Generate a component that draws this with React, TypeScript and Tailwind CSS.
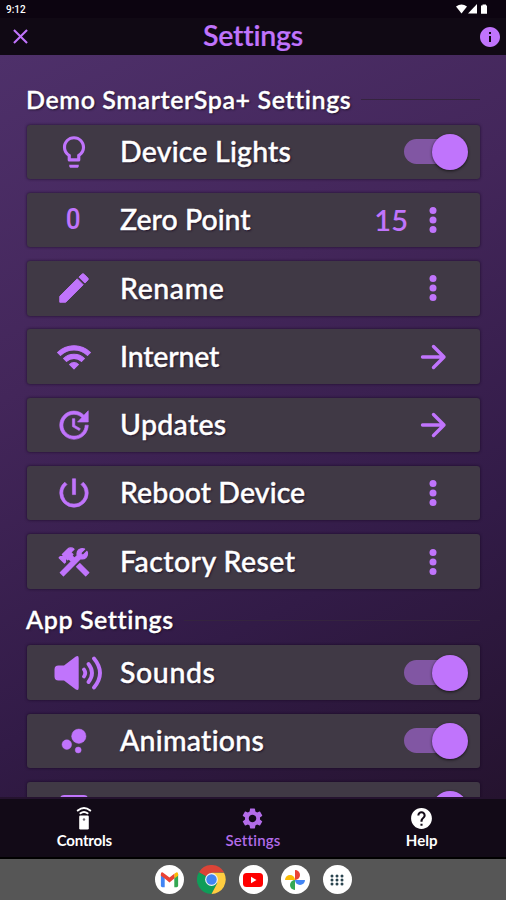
import React, { useState } from 'react';
import {
  MdBubbleChart,
  MdConstruction,
  MdEdit,
  MdHelp,
  MdInfo,
  MdLightbulbOutline,
  MdOutlineClose,
  MdPowerSettingsNew,
  MdSettings,
  MdUpdate,
  MdWifi,
} from 'react-icons/md';

const DotsIcon = () => (
  <svg viewBox="0 0 8 28" className="w-2 h-7" fill="currentColor">
    <circle cx="4" cy="4.4" r="3.5" />
    <circle cx="4" cy="14" r="3.5" />
    <circle cx="4" cy="23.6" r="3.5" />
  </svg>
);

const ArrowIcon = () => (
  <svg viewBox="0 0 28 28" className="w-7 h-7" fill="none" stroke="currentColor" strokeWidth="3.4" strokeLinecap="round" strokeLinejoin="round">
    <path d="M3.500 14H25M14.500 3.500L25 14 14.500 24.500" />
  </svg>
);

const SoundIcon = () => (
  <svg viewBox="0 0 50 36" className="w-[50px] h-9 ml-2.5 shrink-0" fill="none" stroke="currentColor" strokeWidth="3.8" strokeLinecap="round">
    <path d="M4.500 10.500H10L21.500 1.800q3.200-2 3.200 1.500v29.400q0 3.500-3.200 1.500L10 25.500H4.500Q.5 25.500.5 21.500v-7q0-4 4-4z" fill="currentColor" stroke="none" />
    <path d="M30 14.500q2.500 3.500 0 7M34.500 9q7 9 0 18M40 3.500q12 14.500 0 29" />
  </svg>
);

const RemoteIcon = () => (
  <svg viewBox="0 0 16 25" className="w-4 h-[25px]" fill="none" stroke="currentColor" strokeWidth="2" strokeLinecap="round">
    <path d="M1.800 4.500Q8-.5 14.200 4.500M4.500 7.300q3.500-2.600 7 0" />
    <rect x="3.200" y="9.500" width="9.600" height="14" rx="1.200" fill="currentColor" stroke="none" />
    <circle cx="8" cy="13.500" r="1.200" fill="#6b6570" stroke="none" />
  </svg>
);

const GmailLogo = () => (
  <svg viewBox="0 0 24 24" className="w-[23px] h-[23px]">
    <path d="M3 6.500l4 3V20H4.500Q3 20 3 18.500z" fill="#4285f4" />
    <path d="M21 6.500l-4 3V20h2.500q1.500 0 1.500-1.500z" fill="#34a853" />
    <path d="M17 6l2-1.300q2-.7 2 1.800v1.500l-4 3z" fill="#fbbc04" />
    <path d="M3 8V6.500Q3 4 5 4.700L12 10l5-4v5l-5 4-5-4z" fill="#ea4335" />
  </svg>
);

const ChromeLogo = () => (
  <svg viewBox="0 0 30 30" className="w-[29px] h-[29px]">
    <path d="M15 15L2 7.500A15 15 0 0 1 28 7.500L15 8z" fill="#db4437" />
    <path d="M15 15L2 7.500A15 15 0 0 0 15 30L21 18.500z" fill="#0f9d58" />
    <path d="M15 8h13A15 15 0 0 1 15 30l6-11.500z" fill="#ffcd40" />
    <circle cx="15" cy="15" r="6.600" fill="#f1f1f1" />
    <circle cx="15" cy="15" r="5.400" fill="#4285f4" />
  </svg>
);

const YouTubeLogo = () => (
  <svg viewBox="0 0 24 24" className="w-6 h-6">
    <rect x="2" y="5" width="20" height="14" rx="3.500" fill="#ff0000" />
    <path d="M10 8.800v6.400l5.500-3.200z" fill="#fff" />
  </svg>
);

const PhotosLogo = () => (
  <svg viewBox="0 0 24 24" className="w-6 h-6">
    <path d="M12 2a5 5 0 0 1 0 10z" fill="#ea4335" />
    <path d="M22 12a5 5 0 0 1-10 0z" fill="#4285f4" />
    <path d="M12 22a5 5 0 0 1 0-10z" fill="#34a853" />
    <path d="M2 12a5 5 0 0 1 10 0z" fill="#fbbc04" />
  </svg>
);

const AppsLogo = () => (
  <svg viewBox="0 0 24 24" className="w-6 h-6" fill="#29434e">
    {[7, 12, 17].map((x) => [8, 12, 16].map((y) => <circle key={`${x}-${y}`} cx={x} cy={y} r="1.500" />))}
  </svg>
);

interface ToggleProps {
  defaultOn?: boolean;
}

const Toggle: React.FC<ToggleProps> = ({ defaultOn = true }) => {
  const [on, setOn] = useState(defaultOn);

  return (
    <button
      type="button"
      role="switch"
      aria-checked={on}
      onClick={() => setOn(!on)}
      className={`w-[60px] h-[25px] mr-4 flex items-center rounded-full bg-[#8156a3] ${on ? 'justify-end' : 'justify-start'}`}
    >
      <span className={`w-9 h-9 shrink-0 rounded-full bg-[#c074fc] shadow-[0_1px_3px_rgba(0,0,0,0.65)] ${on ? '-mr-1' : '-ml-1'}`} />
    </button>
  );
};

interface RowProps {
  icon: React.ReactNode;
  label?: string;
  labelClass?: string;
  children: React.ReactNode;
}

const Row: React.FC<RowProps> = ({ icon, label, labelClass = '', children }) => (
  <div className="h-[54.500px] shrink-0 flex items-center rounded-[3px] bg-[#403945] shadow-[0_0_3px_rgba(20,5,30,0.8)] text-[#c074fc]">
    {/* The icons carry an unfilled bounding box that must stay unstroked */}
    <div className="w-[93px] flex justify-center shrink-0 [&_svg>[fill=none]]:stroke-none [&_g>[fill=none]]:stroke-none">{icon}</div>
    <span className={`flex-1 pb-px whitespace-nowrap text-white text-[28.500px] leading-none font-medium [-webkit-text-stroke:0.4px_white] [text-shadow:1px_1px_2px_#1c1028] ${labelClass}`}>{label}</span>
    {children}
  </div>
);

const Action: React.FC<{ children: React.ReactNode }> = ({ children }) => (
  <button type="button" className="w-9 mr-[29px] flex justify-center">{children}</button>
);

const SectionTitle: React.FC<{ className?: string; children: React.ReactNode }> = ({ className = '', children }) => (
  <div className="h-[41px] shrink-0 flex items-center gap-2.5">
    <h2 className={`-ml-px pb-px text-white text-[25px] leading-none font-semibold whitespace-nowrap [-webkit-text-stroke:0.3px_white] [text-shadow:1px_1px_2px_#1c1028] ${className}`}>{children}</h2>
    <div className="flex-1 h-px bg-[#35243f]" />
  </div>
);

export default function App() {
  return (
    <div className="w-[506px] h-[900px] flex flex-col overflow-hidden bg-[#100914] font-['Lato',sans-serif] [font-variant-ligatures:none]">
      {/* Status bar */}
      <div className="h-[18px] shrink-0 flex items-center justify-between pl-1.5 pr-[18px] bg-[#0c0410] text-white">
        <span className="text-[10px] font-['Roboto',sans-serif] font-medium">9:12</span>
        <svg viewBox="0 0 32 10" className="w-8 h-2.5" fill="#fff">
          <path d="M0 2.500Q5.500-1.500 11 2.500L5.500 9.500z" />
          <path d="M21 0v9.500h-9z" />
          <path d="M26.500.5H30v1h1v8.200h-6V1.500h1.500z" />
        </svg>
      </div>

      {/* Title bar */}
      <header className="h-[37px] shrink-0 flex items-center justify-between pl-2 pr-1 text-[#c074fc]">
        <MdOutlineClose className="w-[25px] h-[25px]" />
        <h1 className="pb-0.5 mr-[5px] text-[28.500px] leading-none font-semibold tracking-[-0.2px] [-webkit-text-stroke:0.2px_#c074fc]">Settings</h1>
        <MdInfo className="w-6 h-6" />
      </header>

      <main className="flex-1 min-h-0 overflow-hidden pt-6 pl-[27px] pr-[26px] bg-[linear-gradient(154deg,#4e306a_0%,#43265a_35%,#321b47_70%,#25132f_100%)]">
        <SectionTitle className="tracking-[0.580px]">Demo SmarterSpa+ Settings</SectionTitle>
        <div className="mt-[4.500px] flex flex-col gap-[13.800px]">
          <Row icon={<MdLightbulbOutline className="w-[38px] h-[38px]" />} label="Device Lights" labelClass="tracking-[0.200px]">
            <Toggle />
          </Row>
          <Row icon={<span className="pb-px text-[29px] leading-none font-medium font-['Roboto',sans-serif] scale-x-90">0</span>} label="Zero Point">
            <span className="mr-[7px] pb-0.5 text-[29px] leading-none font-semibold">15</span>
            <Action><DotsIcon /></Action>
          </Row>
          <Row icon={<MdEdit className="w-[38px] h-[38px]" stroke="currentColor" strokeWidth="0.6" strokeLinejoin="round" />} label="Rename" labelClass="tracking-[0.600px]">
            <Action><DotsIcon /></Action>
          </Row>
          <Row icon={<MdWifi className="w-9 h-9" stroke="currentColor" strokeWidth="0.7" strokeLinejoin="round" />} label="Internet" labelClass="tracking-[-0.200px]">
            <Action><ArrowIcon /></Action>
          </Row>
          <Row icon={<MdUpdate className="w-[38px] h-[38px]" stroke="currentColor" strokeWidth="0.4" strokeLinejoin="round" />} label="Updates" labelClass="tracking-[0.300px]">
            <Action><ArrowIcon /></Action>
          </Row>
          <Row icon={<MdPowerSettingsNew className="w-[38px] h-[38px]" stroke="currentColor" strokeWidth="0.4" strokeLinejoin="round" />} label="Reboot Device" labelClass="tracking-[0.080px]">
            <Action><DotsIcon /></Action>
          </Row>
          <Row icon={<MdConstruction className="w-9 h-9" stroke="currentColor" strokeWidth="0.8" strokeLinejoin="round" />} label="Factory Reset" labelClass="tracking-[0.420px]">
            <Action><DotsIcon /></Action>
          </Row>
        </div>

        <div className="mt-[11px]">
          <SectionTitle className="tracking-[0.580px]">App Settings</SectionTitle>
        </div>
        <div className="mt-[4.500px] flex flex-col gap-[13.800px]">
          <Row icon={<SoundIcon />} label="Sounds" labelClass="tracking-[0.600px]">
            <Toggle />
          </Row>
          <Row icon={<MdBubbleChart className="w-9 h-9" stroke="currentColor" strokeWidth="0.3" />} label="Animations" labelClass="tracking-[0.250px]">
            <Toggle />
          </Row>
          <Row icon={<span className="w-7 h-[29px] rounded-sm border-[3px] border-[#c074fc]" />}>
            <Toggle />
          </Row>
        </div>
      </main>

      {/* Bottom tabs */}
      <nav className="h-[60px] shrink-0 grid grid-cols-3 border-t-2 border-[#25132f] bg-[#120a17] text-white text-[15px] leading-none font-bold">
        <button type="button" className="flex flex-col items-center pt-[7px]">
          <RemoteIcon />
          <span className="mt-0.5 tracking-[-0.200px]">Controls</span>
        </button>
        <button type="button" className="flex flex-col items-center pt-[7px] text-[#b36ce9]">
          <MdSettings className="w-[25px] h-[25px]" />
          <span className="mt-0.5 font-semibold tracking-[0.200px]">Settings</span>
        </button>
        <button type="button" className="flex flex-col items-center pt-[7px]">
          <MdHelp className="w-[25px] h-[25px]" />
          <span className="mt-0.5">Help</span>
        </button>
      </nav>

      {/* Dock */}
      <div className="h-[43px] shrink-0 flex items-center justify-center gap-[13px] border-t-2 border-black bg-[#565656]">
        <span className="w-[29px] h-[29px] rounded-full bg-white flex items-center justify-center"><GmailLogo /></span>
        <ChromeLogo />
        <span className="w-[29px] h-[29px] rounded-full bg-white flex items-center justify-center"><YouTubeLogo /></span>
        <span className="w-[29px] h-[29px] rounded-full bg-white flex items-center justify-center"><PhotosLogo /></span>
        <span className="w-[29px] h-[29px] rounded-full bg-white flex items-center justify-center"><AppsLogo /></span>
      </div>
    </div>
  );
}
